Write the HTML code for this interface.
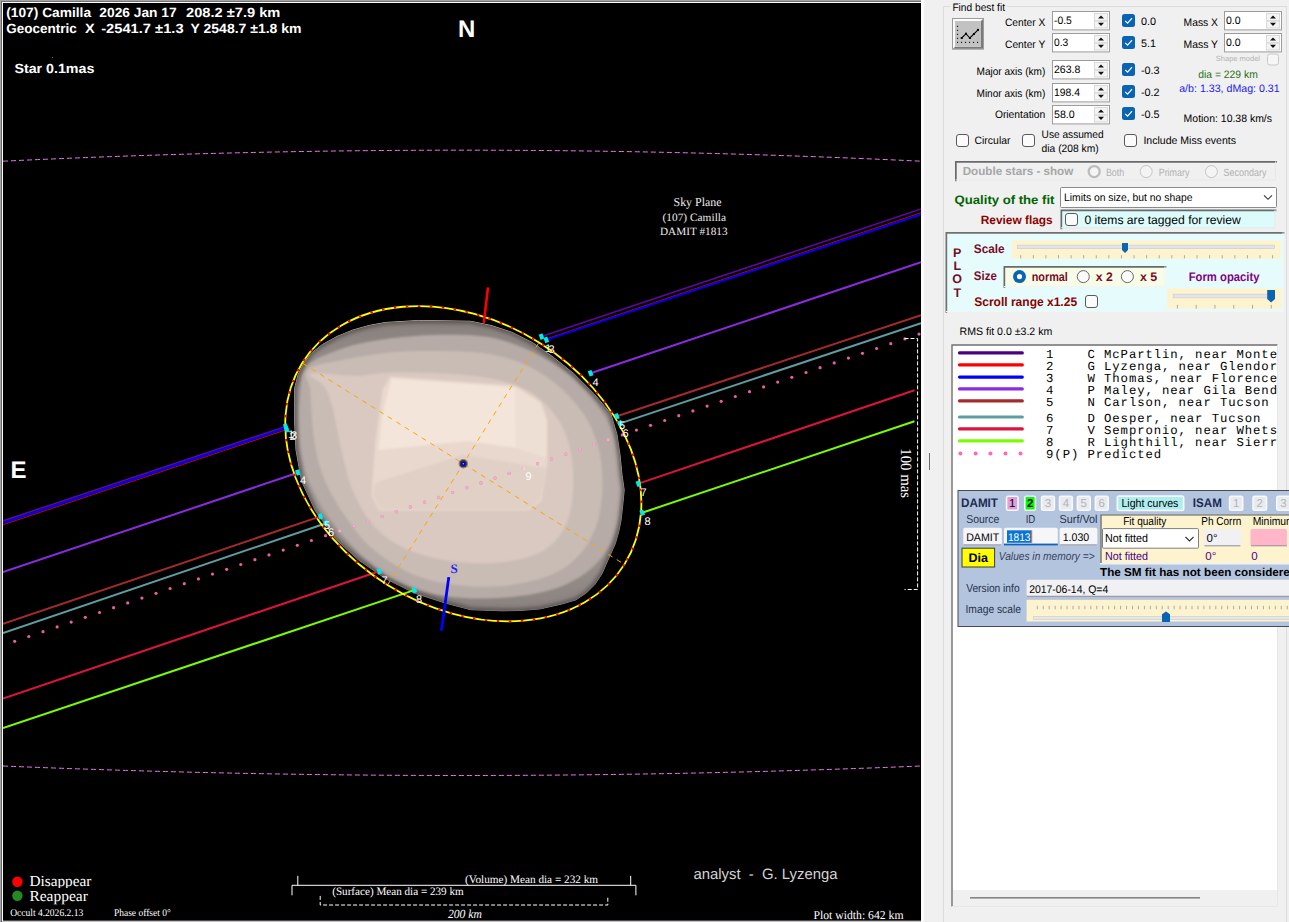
<!DOCTYPE html>
<html><head><meta charset="utf-8"><title>Occult plot</title>
<style>html,body{margin:0;padding:0;background:#f0f0f0;overflow:hidden}svg{display:block}text{white-space:pre}</style></head>
<body>
<svg width="1289" height="922" viewBox="0 0 1289 922" text-rendering="geometricPrecision">
<defs>
<clipPath id="plotclip"><rect x="3" y="3" width="918" height="917"/></clipPath>
<radialGradient id="ast" gradientUnits="userSpaceOnUse" cx="455" cy="440" r="190" gradientTransform="translate(455 440) rotate(32) scale(1 0.78) translate(-455 -440)">
<stop offset="0" stop-color="#f4e4d9"/><stop offset="0.45" stop-color="#e6d5cb"/><stop offset="0.7" stop-color="#cdbdb4"/><stop offset="0.88" stop-color="#aea29b"/><stop offset="1" stop-color="#8c847f"/>
</radialGradient>
<linearGradient id="rim" gradientUnits="userSpaceOnUse" x1="0" y1="320" x2="0" y2="611"><stop offset="0" stop-color="#888078"/><stop offset="0.05" stop-color="#8c8481"/><stop offset="0.3" stop-color="#a49b97"/><stop offset="0.65" stop-color="#a49b97"/><stop offset="0.95" stop-color="#8e8683"/><stop offset="1" stop-color="#8a827f"/></linearGradient>
<filter id="blur1" x="-10%" y="-10%" width="120%" height="120%"><feGaussianBlur stdDeviation="0.9"/></filter>
<filter id="blur2" x="-10%" y="-10%" width="120%" height="120%"><feGaussianBlur stdDeviation="2.2"/></filter>
<clipPath id="astclip"><polygon points="294.5,389 298,375 304,363 311.5,353 322.5,344.5 337,336.5 353,330 369,325.5 385.4,322.5 418.4,320.5 450,320.9 470.6,321.3 491.2,325.5 511.8,332.3 532.4,342.6 553,357 573.7,373.5 594.3,394.1 610.8,413.7 616.9,434.3 620,454.9 622.1,475.5 624.2,490 623.1,501.5 621.1,520 618.7,531.9 615.2,543.9 610.4,554.6 606.2,564.1 602,573.7 594.9,584.4 586.5,592.8 575.8,599.9 561.5,604.1 540,608.9 520,610.5 501.5,610.8 470.6,609.7 445.2,603 414.3,593 385.4,578.5 358.6,560 336,539.5 315.3,510.8 301.5,480.9 296,450 294.5,420"/></clipPath>
<clipPath id="legclip"><rect x="953" y="346" width="324" height="544"/></clipPath>
<clipPath id="pageclip"><rect x="0" y="0" width="1289" height="922"/></clipPath>
</defs>
<rect x="923" y="0" width="366" height="922" fill="#f0f0f0"/>
<rect x="921" y="0" width="3" height="922" fill="#fcfcfc"/>
<rect x="929" y="453" width="1" height="17" fill="#6a6a6a"/>
<path d="M950 6.5 H943.5 V930 M1007 6.5 H1286.5 V930" fill="none" stroke="#dcdcdc" stroke-width="1"/>
<text x="952.4" y="11" font-family="Liberation Sans" font-size="10.8" fill="#000" textLength="52.6" lengthAdjust="spacingAndGlyphs"  xml:space="preserve">Find best fit</text>
<rect x="952" y="18" width="32" height="31.7" fill="#9c9c9c"/><rect x="953" y="19" width="30" height="29.7" fill="#fdfdfd"/><path d="M953 48.7 L955 46.7 H981 V21 L983 19 V48.7 Z" fill="#7a7a7a"/><rect x="955" y="21" width="26" height="25.7" fill="#c2c2c2"/>
<g fill="#000"><rect x="957" y="25.8" width="1.1" height="1.1"/><rect x="957" y="29.8" width="1.1" height="1.1"/><rect x="957" y="33.8" width="1.1" height="1.1"/><rect x="957" y="37.8" width="1.1" height="1.1"/><rect x="957" y="41.8" width="1.1" height="1.1"/><rect x="961.0" y="41.8" width="1.1" height="1.1"/><rect x="965.0" y="41.8" width="1.1" height="1.1"/><rect x="969.0" y="41.8" width="1.1" height="1.1"/><rect x="973.0" y="41.8" width="1.1" height="1.1"/><rect x="977.0" y="41.8" width="1.1" height="1.1"/></g><path d="M961.7 38 L966 33.7 L969.9 38 L978 29.9" fill="none" stroke="#000" stroke-width="1.1"/><g fill="#000"><rect x="960.7" y="37" width="2" height="2"/><rect x="965" y="32.7" width="2" height="2"/><rect x="968.9" y="37" width="2" height="2"/><rect x="972.9" y="33" width="2" height="2"/><rect x="977" y="28.9" width="2" height="2"/></g>
<text x="1005" y="25.7" font-family="Liberation Sans" font-size="10.8" fill="#000" textLength="40.3" lengthAdjust="spacingAndGlyphs"  xml:space="preserve">Center X</text>
<rect x="1052.5" y="11.5" width="57" height="18.4" fill="#fff" stroke="#9c9c9c" stroke-width="1"/><rect x="1094" y="13" width="14" height="15.399999999999999" fill="#f0f0f0"/><rect x="1094.5" y="13.5" width="13" height="7.199999999999999" fill="#f4f4f4" stroke="#dadada" stroke-width="1"/><rect x="1094.5" y="21.2" width="13" height="6.699999999999999" fill="#f4f4f4" stroke="#dadada" stroke-width="1"/><path d="M1098 18.6 L1101 15.4 L1104 18.6 Z" fill="#111"/><path d="M1098 22.799999999999997 L1101 26.0 L1104 22.799999999999997 Z" fill="#111"/>
<text x="1054" y="23.8" font-family="Liberation Sans" font-size="10.8" fill="#000" textLength="17.9" lengthAdjust="spacingAndGlyphs"  xml:space="preserve">-0.5</text>
<text x="1005" y="47.7" font-family="Liberation Sans" font-size="10.8" fill="#000" textLength="40.3" lengthAdjust="spacingAndGlyphs"  xml:space="preserve">Center Y</text>
<rect x="1052.5" y="33.5" width="57" height="18.4" fill="#fff" stroke="#9c9c9c" stroke-width="1"/><rect x="1094" y="35" width="14" height="15.399999999999999" fill="#f0f0f0"/><rect x="1094.5" y="35.5" width="13" height="7.199999999999999" fill="#f4f4f4" stroke="#dadada" stroke-width="1"/><rect x="1094.5" y="43.2" width="13" height="6.699999999999999" fill="#f4f4f4" stroke="#dadada" stroke-width="1"/><path d="M1098 40.6 L1101 37.4 L1104 40.6 Z" fill="#111"/><path d="M1098 44.8 L1101 48.0 L1104 44.8 Z" fill="#111"/>
<text x="1054" y="45.8" font-family="Liberation Sans" font-size="10.8" fill="#000" textLength="14.2" lengthAdjust="spacingAndGlyphs"  xml:space="preserve">0.3</text>
<text x="976.5" y="74.9" font-family="Liberation Sans" font-size="10.8" fill="#000" textLength="68.8" lengthAdjust="spacingAndGlyphs"  xml:space="preserve">Major axis (km)</text>
<rect x="1052.5" y="60.5" width="57" height="18.4" fill="#fff" stroke="#9c9c9c" stroke-width="1"/><rect x="1094" y="62" width="14" height="15.399999999999999" fill="#f0f0f0"/><rect x="1094.5" y="62.5" width="13" height="7.199999999999999" fill="#f4f4f4" stroke="#dadada" stroke-width="1"/><rect x="1094.5" y="70.2" width="13" height="6.699999999999999" fill="#f4f4f4" stroke="#dadada" stroke-width="1"/><path d="M1098 67.6 L1101 64.4 L1104 67.6 Z" fill="#111"/><path d="M1098 71.80000000000001 L1101 75.0 L1104 71.80000000000001 Z" fill="#111"/>
<text x="1054" y="72.8" font-family="Liberation Sans" font-size="10.8" fill="#000" textLength="26.4" lengthAdjust="spacingAndGlyphs"  xml:space="preserve">263.8</text>
<text x="976.5" y="96.8" font-family="Liberation Sans" font-size="10.8" fill="#000" textLength="68.8" lengthAdjust="spacingAndGlyphs"  xml:space="preserve">Minor axis (km)</text>
<rect x="1052.5" y="83.5" width="57" height="18.4" fill="#fff" stroke="#9c9c9c" stroke-width="1"/><rect x="1094" y="85" width="14" height="15.399999999999999" fill="#f0f0f0"/><rect x="1094.5" y="85.5" width="13" height="7.199999999999999" fill="#f4f4f4" stroke="#dadada" stroke-width="1"/><rect x="1094.5" y="93.2" width="13" height="6.699999999999999" fill="#f4f4f4" stroke="#dadada" stroke-width="1"/><path d="M1098 90.6 L1101 87.4 L1104 90.6 Z" fill="#111"/><path d="M1098 94.80000000000001 L1101 98.0 L1104 94.80000000000001 Z" fill="#111"/>
<text x="1054" y="95.8" font-family="Liberation Sans" font-size="10.8" fill="#000" textLength="26" lengthAdjust="spacingAndGlyphs"  xml:space="preserve">198.4</text>
<text x="994.9" y="117.5" font-family="Liberation Sans" font-size="10.8" fill="#000" textLength="50.4" lengthAdjust="spacingAndGlyphs"  xml:space="preserve">Orientation</text>
<rect x="1052.5" y="105.5" width="57" height="18.4" fill="#fff" stroke="#9c9c9c" stroke-width="1"/><rect x="1094" y="107" width="14" height="15.399999999999999" fill="#f0f0f0"/><rect x="1094.5" y="107.5" width="13" height="7.199999999999999" fill="#f4f4f4" stroke="#dadada" stroke-width="1"/><rect x="1094.5" y="115.2" width="13" height="6.699999999999999" fill="#f4f4f4" stroke="#dadada" stroke-width="1"/><path d="M1098 112.6 L1101 109.4 L1104 112.6 Z" fill="#111"/><path d="M1098 116.80000000000001 L1101 120.0 L1104 116.80000000000001 Z" fill="#111"/>
<text x="1054" y="117.8" font-family="Liberation Sans" font-size="10.8" fill="#000" textLength="20.7" lengthAdjust="spacingAndGlyphs"  xml:space="preserve">58.0</text>
<rect x="1122" y="14" width="13" height="13" rx="2.5" fill="#0a64b4"/><path d="M1125.2 20.8 L1127.6 23.2 L1132 18.2" fill="none" stroke="#fff" stroke-width="1.2"/>
<text x="1141" y="24.7" font-family="Liberation Sans" font-size="10.8" fill="#000"  xml:space="preserve">0.0</text>
<rect x="1122" y="36" width="13" height="13" rx="2.5" fill="#0a64b4"/><path d="M1125.2 42.8 L1127.6 45.2 L1132 40.2" fill="none" stroke="#fff" stroke-width="1.2"/>
<text x="1141" y="46.7" font-family="Liberation Sans" font-size="10.8" fill="#000"  xml:space="preserve">5.1</text>
<rect x="1122" y="63" width="13" height="13" rx="2.5" fill="#0a64b4"/><path d="M1125.2 69.8 L1127.6 72.2 L1132 67.2" fill="none" stroke="#fff" stroke-width="1.2"/>
<text x="1141" y="73.7" font-family="Liberation Sans" font-size="10.8" fill="#000"  xml:space="preserve">-0.3</text>
<rect x="1122" y="85" width="13" height="13" rx="2.5" fill="#0a64b4"/><path d="M1125.2 91.8 L1127.6 94.2 L1132 89.2" fill="none" stroke="#fff" stroke-width="1.2"/>
<text x="1141" y="95.7" font-family="Liberation Sans" font-size="10.8" fill="#000"  xml:space="preserve">-0.2</text>
<rect x="1122" y="107" width="13" height="13" rx="2.5" fill="#0a64b4"/><path d="M1125.2 113.8 L1127.6 116.2 L1132 111.2" fill="none" stroke="#fff" stroke-width="1.2"/>
<text x="1141" y="117.7" font-family="Liberation Sans" font-size="10.8" fill="#000"  xml:space="preserve">-0.5</text>
<text x="1183.6" y="25.7" font-family="Liberation Sans" font-size="10.8" fill="#000" textLength="34.4" lengthAdjust="spacingAndGlyphs"  xml:space="preserve">Mass X</text>
<rect x="1224.5" y="11.5" width="57" height="18.4" fill="#fff" stroke="#9c9c9c" stroke-width="1"/><rect x="1266" y="13" width="14" height="15.399999999999999" fill="#f0f0f0"/><rect x="1266.5" y="13.5" width="13" height="7.199999999999999" fill="#f4f4f4" stroke="#dadada" stroke-width="1"/><rect x="1266.5" y="21.2" width="13" height="6.699999999999999" fill="#f4f4f4" stroke="#dadada" stroke-width="1"/><path d="M1270 18.6 L1273 15.4 L1276 18.6 Z" fill="#111"/><path d="M1270 22.799999999999997 L1273 26.0 L1276 22.799999999999997 Z" fill="#111"/>
<text x="1226" y="23.8" font-family="Liberation Sans" font-size="10.8" fill="#000" textLength="14.6" lengthAdjust="spacingAndGlyphs"  xml:space="preserve">0.0</text>
<text x="1183.6" y="47.7" font-family="Liberation Sans" font-size="10.8" fill="#000" textLength="34.4" lengthAdjust="spacingAndGlyphs"  xml:space="preserve">Mass Y</text>
<rect x="1224.5" y="33.5" width="57" height="18.4" fill="#fff" stroke="#9c9c9c" stroke-width="1"/><rect x="1266" y="35" width="14" height="15.399999999999999" fill="#f0f0f0"/><rect x="1266.5" y="35.5" width="13" height="7.199999999999999" fill="#f4f4f4" stroke="#dadada" stroke-width="1"/><rect x="1266.5" y="43.2" width="13" height="6.699999999999999" fill="#f4f4f4" stroke="#dadada" stroke-width="1"/><path d="M1270 40.6 L1273 37.4 L1276 40.6 Z" fill="#111"/><path d="M1270 44.8 L1273 48.0 L1276 44.8 Z" fill="#111"/>
<text x="1226" y="45.8" font-family="Liberation Sans" font-size="10.8" fill="#000" textLength="14.6" lengthAdjust="spacingAndGlyphs"  xml:space="preserve">0.0</text>
<text x="1215.8" y="60.5" font-family="Liberation Sans" font-size="7.6" fill="#b4b4b4" textLength="44.2" lengthAdjust="spacingAndGlyphs"  xml:space="preserve">Shape model</text>
<rect x="1267.5" y="54.0" width="11" height="11" rx="2.5" fill="#f6f6f6" stroke="#c8c8c8" stroke-width="1"/>
<text x="1198.2" y="77.7" font-family="Liberation Sans" font-size="10.8" fill="#2a7018" textLength="59.6" lengthAdjust="spacingAndGlyphs"  xml:space="preserve">dia = 229 km</text>
<text x="1179.2" y="91.9" font-family="Liberation Sans" font-size="10.8" fill="#2222ee" textLength="100.5" lengthAdjust="spacingAndGlyphs"  xml:space="preserve">a/b: 1.33, dMag: 0.31</text>
<text x="1183.6" y="121.7" font-family="Liberation Sans" font-size="10.8" fill="#000" textLength="88.4" lengthAdjust="spacingAndGlyphs"  xml:space="preserve">Motion: 10.38 km/s</text>
<rect x="956.5" y="134.5" width="12" height="12" rx="2.5" fill="#fbfbfb" stroke="#5a5a5a" stroke-width="1"/>
<text x="974.5" y="144.3" font-family="Liberation Sans" font-size="10.8" fill="#000" textLength="36" lengthAdjust="spacingAndGlyphs"  xml:space="preserve">Circular</text>
<rect x="1022.5" y="134.5" width="12" height="12" rx="2.5" fill="#fbfbfb" stroke="#5a5a5a" stroke-width="1"/>
<text x="1041.6" y="137.5" font-family="Liberation Sans" font-size="10.8" fill="#000" textLength="62" lengthAdjust="spacingAndGlyphs"  xml:space="preserve">Use assumed</text>
<text x="1041.6" y="152" font-family="Liberation Sans" font-size="10.8" fill="#000" textLength="57" lengthAdjust="spacingAndGlyphs"  xml:space="preserve">dia (208 km)</text>
<rect x="1124.5" y="134.5" width="12" height="12" rx="2.5" fill="#fbfbfb" stroke="#5a5a5a" stroke-width="1"/>
<text x="1143.4" y="144.3" font-family="Liberation Sans" font-size="10.8" fill="#000" textLength="92.6" lengthAdjust="spacingAndGlyphs"  xml:space="preserve">Include Miss events</text>
<rect x="955" y="161" width="321" height="19.5" fill="#f0f0f0"/><path d="M955 180.5 V161 H1276" fill="none" stroke="#696969" stroke-width="1.7" transform="translate(0.85 0.85)"/><path d="M955.5 180.0 H1275.5 V161.5" fill="none" stroke="#e8e8e8" stroke-width="1"/>
<text x="962.7" y="174.5" font-family="Liberation Sans" font-size="11.8" fill="#a6a6a6" textLength="110.6" lengthAdjust="spacingAndGlyphs" font-weight="bold"  xml:space="preserve">Double stars - show</text>
<circle cx="1094.2" cy="171.6" r="5.5" fill="#f4f4f4" stroke="#bdbdbd" stroke-width="2.4"/>
<text x="1105.9" y="175.7" font-family="Liberation Sans" font-size="10.5" fill="#b0b0b0" textLength="18.3" lengthAdjust="spacingAndGlyphs"  xml:space="preserve">Both</text>
<circle cx="1146.2" cy="171.6" r="6" fill="#f4f4f4" stroke="#c4c4c4" stroke-width="1"/>
<text x="1158.7" y="175.7" font-family="Liberation Sans" font-size="10.5" fill="#b0b0b0" textLength="30.7" lengthAdjust="spacingAndGlyphs"  xml:space="preserve">Primary</text>
<circle cx="1211.4" cy="171.6" r="6" fill="#f4f4f4" stroke="#c4c4c4" stroke-width="1"/>
<text x="1223.6" y="175.7" font-family="Liberation Sans" font-size="10.5" fill="#b0b0b0" textLength="42.8" lengthAdjust="spacingAndGlyphs"  xml:space="preserve">Secondary</text>
<text x="954.6" y="203.7" font-family="Liberation Sans" font-size="12.3" fill="#006400" textLength="99.8" lengthAdjust="spacingAndGlyphs" font-weight="bold"  xml:space="preserve">Quality of the fit</text>
<rect x="1060.5" y="187.5" width="216" height="20" rx="1" fill="#fff" stroke="#8a8a8a" stroke-width="1"/>
<text x="1064" y="201.3" font-family="Liberation Sans" font-size="10.8" fill="#000" textLength="128.5" lengthAdjust="spacingAndGlyphs"  xml:space="preserve">Limits on size, but no shape</text>
<path d="M1264 195.3 L1268 199.3 L1272 195.3" fill="none" stroke="#333" stroke-width="1.1"/>
<text x="980.7" y="223.6" font-family="Liberation Sans" font-size="12" fill="#8b0000" textLength="72" lengthAdjust="spacingAndGlyphs" font-weight="bold"  xml:space="preserve">Review flags</text>
<rect x="1060.5" y="209.6" width="215" height="18.7" fill="#dcfcfc"/><path d="M1060.5 228.29999999999998 V209.6 H1275.5" fill="none" stroke="#696969" stroke-width="1.7" transform="translate(0.85 0.85)"/><path d="M1061.0 227.79999999999998 H1275.0 V210.1" fill="none" stroke="#e8e8e8" stroke-width="1"/>
<rect x="1065.5" y="213.5" width="12" height="12" rx="2.5" fill="#fbfbfb" stroke="#5a5a5a" stroke-width="1"/>
<text x="1084.4" y="224" font-family="Liberation Sans" font-size="12.2" fill="#000" textLength="156.4" lengthAdjust="spacingAndGlyphs"  xml:space="preserve">0 items are tagged for review</text>
<rect x="945.5" y="232" width="338" height="80" fill="#e6fcfc"/><path d="M945.5 312 V232 H1283.5" fill="none" stroke="#707070" stroke-width="1.7" transform="translate(0.85 0.85)"/><path d="M946.0 311.5 H1283.0 V232.5" fill="none" stroke="#f4f4f4" stroke-width="1"/>
<text x="957.2" y="257" font-family="Liberation Sans" font-size="12.5" fill="#7a0a28" text-anchor="middle" font-weight="bold"  xml:space="preserve">P</text>
<text x="957.2" y="270.4" font-family="Liberation Sans" font-size="12.5" fill="#7a0a28" text-anchor="middle" font-weight="bold"  xml:space="preserve">L</text>
<text x="957.2" y="283.2" font-family="Liberation Sans" font-size="12.5" fill="#7a0a28" text-anchor="middle" font-weight="bold"  xml:space="preserve">O</text>
<text x="957.2" y="296.5" font-family="Liberation Sans" font-size="12.5" fill="#7a0a28" text-anchor="middle" font-weight="bold"  xml:space="preserve">T</text>
<text x="973.8" y="253.4" font-family="Liberation Sans" font-size="12.5" fill="#7a0a28" textLength="30.9" lengthAdjust="spacingAndGlyphs" font-weight="bold"  xml:space="preserve">Scale</text>
<rect x="1011.8" y="240.2" width="269" height="18.6" fill="#fdf4cf"/>
<rect x="1017.5" y="245.2" width="257" height="3.4" fill="#e4e4e8" stroke="#d0d0d4" stroke-width="0.8"/>
<path d="M1020.70 255.2 V258.4 M1033.30 255.2 V258.4 M1045.89 255.2 V258.4 M1058.49 255.2 V258.4 M1071.08 255.2 V258.4 M1083.67 255.2 V258.4 M1096.27 255.2 V258.4 M1108.87 255.2 V258.4 M1121.46 255.2 V258.4 M1134.06 255.2 V258.4 M1146.65 255.2 V258.4 M1159.25 255.2 V258.4 M1171.84 255.2 V258.4 M1184.43 255.2 V258.4 M1197.03 255.2 V258.4 M1209.62 255.2 V258.4 M1222.22 255.2 V258.4 M1234.82 255.2 V258.4 M1247.41 255.2 V258.4 M1260.01 255.2 V258.4 M1272.60 255.2 V258.4 " stroke="#b0a8a0" stroke-width="1" fill="none"/>
<path d="M1122 243 H1128 V250 L1125 253 L1122 250 Z" fill="#0a64b4"/>
<text x="973.8" y="279.8" font-family="Liberation Sans" font-size="12.5" fill="#7a0a28" textLength="23" lengthAdjust="spacingAndGlyphs" font-weight="bold"  xml:space="preserve">Size</text>
<rect x="1003.5" y="266" width="162" height="21" fill="#f6fce6"/><path d="M1003.5 287 V266 H1165.5" fill="none" stroke="#6a6a6a" stroke-width="1.7" transform="translate(0.85 0.85)"/><path d="M1004.0 286.5 H1165.0 V266.5" fill="none" stroke="#f4f4f4" stroke-width="1"/>
<circle cx="1019.5" cy="276.6" r="6.5" fill="#0a64b4"/><circle cx="1019.5" cy="276.6" r="2.6" fill="#fff"/>
<text x="1031.7" y="280.7" font-family="Liberation Sans" font-size="12.5" fill="#7a0a28" textLength="36.1" lengthAdjust="spacingAndGlyphs" font-weight="bold"  xml:space="preserve">normal</text>
<circle cx="1083.3" cy="276.6" r="6" fill="#fbfbfb" stroke="#666" stroke-width="1"/>
<text x="1095.8" y="280.7" font-family="Liberation Sans" font-size="12.5" fill="#7a0a28" textLength="17" lengthAdjust="spacingAndGlyphs" font-weight="bold"  xml:space="preserve">x 2</text>
<circle cx="1127.4" cy="276.6" r="6" fill="#fbfbfb" stroke="#666" stroke-width="1"/>
<text x="1139.9" y="280.7" font-family="Liberation Sans" font-size="12.5" fill="#7a0a28" textLength="17.3" lengthAdjust="spacingAndGlyphs" font-weight="bold"  xml:space="preserve">x 5</text>
<text x="1188.7" y="280.7" font-family="Liberation Sans" font-size="12.5" fill="#800080" textLength="70.8" lengthAdjust="spacingAndGlyphs" font-weight="bold"  xml:space="preserve">Form opacity</text>
<rect x="1167.2" y="288.3" width="114.6" height="20.3" fill="#fdf4cf"/>
<rect x="1173.3" y="294.2" width="101" height="3.6" fill="#e4e4e8" stroke="#d0d0d4" stroke-width="0.8"/>
<path d="M1177.40 304.9 V308.6 M1196.18 304.9 V308.6 M1214.96 304.9 V308.6 M1233.74 304.9 V308.6 M1252.52 304.9 V308.6 M1271.30 304.9 V308.6 " stroke="#b0a8a0" stroke-width="1" fill="none"/>
<path d="M1267.2 290 H1275 V299 L1271.1 302.4 L1267.2 299 Z" fill="#0a64b4"/>
<text x="974.2" y="305.8" font-family="Liberation Sans" font-size="12.5" fill="#8b0000" textLength="102.9" lengthAdjust="spacingAndGlyphs" font-weight="bold"  xml:space="preserve">Scroll range x1.25</text>
<rect x="1085.5" y="295.5" width="12" height="12" rx="2.5" fill="#fbfbfb" stroke="#5a5a5a" stroke-width="1"/>
<text x="959.5" y="334.8" font-family="Liberation Sans" font-size="10.8" fill="#000" textLength="92.8" lengthAdjust="spacingAndGlyphs"  xml:space="preserve">RMS fit 0.0 ±3.2 km</text>
<rect x="951.5" y="344.5" width="326" height="562" fill="#fff"/>
<path d="M952 906.5 V345 H1277.5" fill="none" stroke="#6e6e6e" stroke-width="1.4"/>
<path d="M1277.5 345 V906.5 H952" fill="none" stroke="#e6e6e6" stroke-width="1"/>
<g clip-path="url(#legclip)">
<line x1="959.5" y1="352.9" x2="1022.3" y2="352.9" stroke="#4b0082" stroke-width="3.2" stroke-linecap="round"/>
<text x="1046.1" y="357.8" font-family="Liberation Mono" font-size="12.3" fill="#000" letter-spacing="0.9" xml:space="preserve">1    C McPartlin, near Montebello</text>
<line x1="959.5" y1="364.9" x2="1022.3" y2="364.9" stroke="#ff0000" stroke-width="3.2" stroke-linecap="round"/>
<text x="1046.1" y="369.6" font-family="Liberation Mono" font-size="12.3" fill="#000" letter-spacing="0.9" xml:space="preserve">2    G Lyzenga, near Glendora</text>
<line x1="959.5" y1="377.1" x2="1022.3" y2="377.1" stroke="#0000ff" stroke-width="3.2" stroke-linecap="round"/>
<text x="1046.1" y="381.5" font-family="Liberation Mono" font-size="12.3" fill="#000" letter-spacing="0.9" xml:space="preserve">3    W Thomas, near Florence,</text>
<line x1="959.5" y1="388.9" x2="1022.3" y2="388.9" stroke="#8a2be2" stroke-width="3.2" stroke-linecap="round"/>
<text x="1046.1" y="393.5" font-family="Liberation Mono" font-size="12.3" fill="#000" letter-spacing="0.9" xml:space="preserve">4    P Maley, near Gila Bend,</text>
<line x1="959.5" y1="400.9" x2="1022.3" y2="400.9" stroke="#a52a2a" stroke-width="3.2" stroke-linecap="round"/>
<text x="1046.1" y="405.6" font-family="Liberation Mono" font-size="12.3" fill="#000" letter-spacing="0.9" xml:space="preserve">5    N Carlson, near Tucson</text>
<line x1="959.5" y1="417.0" x2="1022.3" y2="417.0" stroke="#5f9ea0" stroke-width="3.2" stroke-linecap="round"/>
<text x="1046.1" y="421.6" font-family="Liberation Mono" font-size="12.3" fill="#000" letter-spacing="0.9" xml:space="preserve">6    D Oesper, near Tucson</text>
<line x1="959.5" y1="428.9" x2="1022.3" y2="428.9" stroke="#dc143c" stroke-width="3.2" stroke-linecap="round"/>
<text x="1046.1" y="433.5" font-family="Liberation Mono" font-size="12.3" fill="#000" letter-spacing="0.9" xml:space="preserve">7    V Sempronio, near Whetstone</text>
<line x1="959.5" y1="440.9" x2="1022.3" y2="440.9" stroke="#7cfc00" stroke-width="3.2" stroke-linecap="round"/>
<text x="1046.1" y="445.5" font-family="Liberation Mono" font-size="12.3" fill="#000" letter-spacing="0.9" xml:space="preserve">8    R Lighthill, near Sierra</text>
<circle cx="960.4" cy="453.5" r="2" fill="#ff69b4"/><circle cx="975.6" cy="453.5" r="2" fill="#ff69b4"/><circle cx="990.4" cy="453.5" r="2" fill="#ff69b4"/><circle cx="1005.5" cy="453.5" r="2" fill="#ff69b4"/><circle cx="1020.5" cy="453.5" r="2" fill="#ff69b4"/>
<text x="1046.1" y="457.7" font-family="Liberation Mono" font-size="12.3" fill="#000" letter-spacing="0.9" xml:space="preserve">9(P) Predicted</text>
</g>
<rect x="953" y="890" width="324" height="16" fill="#f0f0f0"/>
<rect x="970" y="897" width="230" height="1.6" fill="#858585"/>
<g clip-path="url(#pageclip)">
<rect x="958" y="490.5" width="340" height="136" fill="#b2c4de" stroke="#4a4a52" stroke-width="1"/>
<text x="961" y="507.4" font-family="Liberation Sans" font-size="12.5" fill="#1c2c50" textLength="37" lengthAdjust="spacingAndGlyphs" font-weight="bold"  xml:space="preserve">DAMIT</text>
<rect x="1005.8" y="495.5" width="13" height="15.5" rx="2.5" fill="#f8f8fa"/><rect x="1007.4" y="497" width="9.8" height="12.5" fill="#dda0dd"/><text x="1012.3" y="507.3" font-family="Liberation Sans" font-size="11.5" fill="#000" text-anchor="middle"  xml:space="preserve">1</text>

<rect x="1024" y="495.5" width="12.2" height="15.5" rx="2.5" fill="#f8f8fa"/><rect x="1025.6" y="497" width="9.0" height="12.5" fill="#00ff00"/><text x="1030.1" y="507.3" font-family="Liberation Sans" font-size="11.5" fill="#000" text-anchor="middle" font-weight="bold"  xml:space="preserve">2</text>

<rect x="1040.8" y="495.5" width="14.4" height="15.5" rx="2.5" fill="#f8f8fa"/><rect x="1042.3999999999999" y="497" width="11.2" height="12.5" fill="#e9ebee"/><text x="1048.0" y="507.3" font-family="Liberation Sans" font-size="11.5" fill="#b4b4b4" text-anchor="middle"  xml:space="preserve">3</text>

<rect x="1058.7" y="495.5" width="14.4" height="15.5" rx="2.5" fill="#f8f8fa"/><rect x="1060.3" y="497" width="11.2" height="12.5" fill="#e9ebee"/><text x="1065.9" y="507.3" font-family="Liberation Sans" font-size="11.5" fill="#b4b4b4" text-anchor="middle"  xml:space="preserve">4</text>

<rect x="1076.6" y="495.5" width="14.4" height="15.5" rx="2.5" fill="#f8f8fa"/><rect x="1078.1999999999998" y="497" width="11.2" height="12.5" fill="#e9ebee"/><text x="1083.8" y="507.3" font-family="Liberation Sans" font-size="11.5" fill="#b4b4b4" text-anchor="middle"  xml:space="preserve">5</text>

<rect x="1094.6" y="495.5" width="14.4" height="15.5" rx="2.5" fill="#f8f8fa"/><rect x="1096.1999999999998" y="497" width="11.2" height="12.5" fill="#e9ebee"/><text x="1101.8" y="507.3" font-family="Liberation Sans" font-size="11.5" fill="#b4b4b4" text-anchor="middle"  xml:space="preserve">6</text>

<rect x="1116.5" y="495.3" width="68" height="16" rx="2.5" fill="#f8f8fa"/><rect x="1118.2" y="497" width="64.6" height="12.6" fill="#afeeee"/>
<text x="1121.5" y="506.9" font-family="Liberation Sans" font-size="11.5" fill="#000" textLength="56.9" lengthAdjust="spacingAndGlyphs"  xml:space="preserve">Light curves</text>
<text x="1192.8" y="507.4" font-family="Liberation Sans" font-size="12.5" fill="#1c2c50" textLength="29" lengthAdjust="spacingAndGlyphs" font-weight="bold"  xml:space="preserve">ISAM</text>
<rect x="1228.8" y="495.5" width="14.7" height="15.5" rx="2.5" fill="#f8f8fa"/><rect x="1230.3999999999999" y="497" width="11.5" height="12.5" fill="#e9ebee"/><text x="1236.1499999999999" y="507.3" font-family="Liberation Sans" font-size="11.5" fill="#b4b4b4" text-anchor="middle"  xml:space="preserve">1</text>

<rect x="1252.2" y="495.5" width="15.1" height="15.5" rx="2.5" fill="#f8f8fa"/><rect x="1253.8" y="497" width="11.899999999999999" height="12.5" fill="#e9ebee"/><text x="1259.75" y="507.3" font-family="Liberation Sans" font-size="11.5" fill="#b4b4b4" text-anchor="middle"  xml:space="preserve">2</text>

<rect x="1276" y="495.5" width="15" height="15.5" rx="2.5" fill="#f8f8fa"/><rect x="1277.6" y="497" width="11.8" height="12.5" fill="#e9ebee"/><text x="1283.5" y="507.3" font-family="Liberation Sans" font-size="11.5" fill="#b4b4b4" text-anchor="middle"  xml:space="preserve">3</text>

<text x="966.2" y="523.4" font-family="Liberation Sans" font-size="11.5" fill="#26324a" textLength="33" lengthAdjust="spacingAndGlyphs"  xml:space="preserve">Source</text>
<text x="1025.7" y="523.4" font-family="Liberation Sans" font-size="11.5" fill="#26324a" textLength="9.6" lengthAdjust="spacingAndGlyphs"  xml:space="preserve">ID</text>
<text x="1059.6" y="523.4" font-family="Liberation Sans" font-size="11.5" fill="#26324a" textLength="37.8" lengthAdjust="spacingAndGlyphs"  xml:space="preserve">Surf/Vol</text>
<rect x="963.2" y="527.7" width="38.7" height="17.4" rx="2" fill="#f6f6f8"/><rect x="964" y="544.3" width="37" height="1" fill="#9a9aa0"/>
<text x="966.2" y="540.8" font-family="Liberation Sans" font-size="11" fill="#000" textLength="33" lengthAdjust="spacingAndGlyphs"  xml:space="preserve">DAMIT</text>
<rect x="1004" y="527.7" width="53.8" height="17.4" rx="2" fill="#f6f6f8"/><rect x="1004" y="543.6" width="53.8" height="1.8" fill="#0a64c0"/>
<rect x="1007" y="530.3" width="24.4" height="12.5" fill="#0a74d4"/><rect x="1031.2" y="530.3" width="1" height="12.5" fill="#c86a28"/>
<text x="1008" y="540.8" font-family="Liberation Sans" font-size="11" fill="#fff" textLength="22.5" lengthAdjust="spacingAndGlyphs"  xml:space="preserve">1813</text>
<rect x="1059.6" y="527.7" width="37.8" height="17.4" rx="2" fill="#f6f6f8"/><rect x="1060.4" y="544.3" width="36.2" height="1" fill="#9a9aa0"/>
<text x="1062.7" y="540.8" font-family="Liberation Sans" font-size="11" fill="#000" textLength="26.5" lengthAdjust="spacingAndGlyphs"  xml:space="preserve">1.030</text>
<rect x="1100.4" y="514.7" width="200" height="48.3" fill="#fdf4cf"/><path d="M1101 563 V515 H1300" fill="none" stroke="#5a5a5a" stroke-width="1.2"/><rect x="1100" y="563" width="200" height="1.5" fill="#eef2f8"/>
<text x="1123.2" y="524.8" font-family="Liberation Sans" font-size="11.5" fill="#000" textLength="43.1" lengthAdjust="spacingAndGlyphs"  xml:space="preserve">Fit quality</text>
<text x="1201.3" y="524.8" font-family="Liberation Sans" font-size="11.5" fill="#000" textLength="40" lengthAdjust="spacingAndGlyphs"  xml:space="preserve">Ph Corrn</text>
<text x="1252.7" y="524.8" font-family="Liberation Sans" font-size="11.5" fill="#000" textLength="42" lengthAdjust="spacingAndGlyphs"  xml:space="preserve">Minimum</text>
<rect x="1102.5" y="528.6" width="96" height="19.6" rx="1" fill="#fff" stroke="#7e7e7e" stroke-width="1"/>
<text x="1105" y="542" font-family="Liberation Sans" font-size="11.5" fill="#000" textLength="43" lengthAdjust="spacingAndGlyphs"  xml:space="preserve">Not fitted</text>
<path d="M1185.5 537 L1189.5 541 L1193.5 537" fill="none" stroke="#333" stroke-width="1.1"/>
<rect x="1203.6" y="529.1" width="37.7" height="16.9" rx="2" fill="#f1f1f3"/><rect x="1204.4" y="545.3" width="36" height="1" fill="#8e8e94"/>
<text x="1206.5" y="541.5" font-family="Liberation Sans" font-size="11.5" fill="#000"  xml:space="preserve">0°</text>
<rect x="1250.5" y="529.1" width="36.4" height="16.9" rx="1.5" fill="#ffb6c8"/><rect x="1251" y="545.3" width="36" height="1" fill="#9e8e94"/>
<text x="1105" y="559.5" font-family="Liberation Sans" font-size="11.5" fill="#4b0082" textLength="43" lengthAdjust="spacingAndGlyphs"  xml:space="preserve">Not fitted</text>
<text x="1205.3" y="559.5" font-family="Liberation Sans" font-size="11.5" fill="#4b0082"  xml:space="preserve">0°</text>
<text x="1251.3" y="559.5" font-family="Liberation Sans" font-size="11.5" fill="#4b0082"  xml:space="preserve">0</text>
<rect x="962" y="548.2" width="32.6" height="18.8" fill="#ffff00" stroke="#3c3c3c" stroke-width="1"/>
<text x="978.3" y="562.4" font-family="Liberation Sans" font-size="12.5" fill="#000" text-anchor="middle" font-weight="bold"  xml:space="preserve">Dia</text>
<text x="998.8" y="559.5" font-family="Liberation Sans" font-size="11.5" fill="#36425c" textLength="95.8" lengthAdjust="spacingAndGlyphs" font-style="italic"  xml:space="preserve">Values in memory =&gt;</text>
<text x="1100" y="575.8" font-family="Liberation Sans" font-size="11.5" fill="#000" textLength="197" lengthAdjust="spacingAndGlyphs" font-weight="bold"  xml:space="preserve">The SM fit has not been considered</text>
<text x="966.2" y="591.6" font-family="Liberation Sans" font-size="11.5" fill="#26324a" textLength="53.4" lengthAdjust="spacingAndGlyphs"  xml:space="preserve">Version info</text>
<rect x="1026.6" y="579.8" width="270" height="16.8" rx="2" fill="#f1f1f3"/><rect x="1027" y="595.8" width="270" height="1" fill="#8e8e94"/>
<text x="1029.2" y="592.5" font-family="Liberation Sans" font-size="11" fill="#000" textLength="79" lengthAdjust="spacingAndGlyphs"  xml:space="preserve">2017-06-14, Q=4</text>
<text x="965.5" y="612.8" font-family="Liberation Sans" font-size="11.5" fill="#26324a" textLength="55.5" lengthAdjust="spacingAndGlyphs"  xml:space="preserve">Image scale</text>
<rect x="1026.6" y="599.8" width="270" height="21.7" fill="#fdf4cf"/>
<path d="M1037.30 605.8 V609.3 M1043.25 605.8 V609.3 M1049.20 605.8 V609.3 M1055.15 605.8 V609.3 M1061.10 605.8 V609.3 M1067.05 605.8 V609.3 M1073.00 605.8 V609.3 M1078.95 605.8 V609.3 M1084.90 605.8 V609.3 M1090.85 605.8 V609.3 M1096.80 605.8 V609.3 M1102.75 605.8 V609.3 M1108.70 605.8 V609.3 M1114.65 605.8 V609.3 M1120.60 605.8 V609.3 M1126.55 605.8 V609.3 M1132.50 605.8 V609.3 M1138.45 605.8 V609.3 M1144.40 605.8 V609.3 M1150.35 605.8 V609.3 M1156.30 605.8 V609.3 M1162.25 605.8 V609.3 M1168.20 605.8 V609.3 M1174.15 605.8 V609.3 M1180.10 605.8 V609.3 M1186.05 605.8 V609.3 M1192.00 605.8 V609.3 M1197.95 605.8 V609.3 M1203.90 605.8 V609.3 M1209.85 605.8 V609.3 M1215.80 605.8 V609.3 M1221.75 605.8 V609.3 M1227.70 605.8 V609.3 M1233.65 605.8 V609.3 M1239.60 605.8 V609.3 M1245.55 605.8 V609.3 M1251.50 605.8 V609.3 M1257.45 605.8 V609.3 M1263.40 605.8 V609.3 M1269.35 605.8 V609.3 M1275.30 605.8 V609.3 M1281.25 605.8 V609.3 M1287.20 605.8 V609.3 " stroke="#a8a8b0" stroke-width="1" fill="none"/>
<rect x="1033.6" y="616.4" width="262" height="3" fill="#e6e6e6" stroke="#cfcfcf" stroke-width="0.7"/>
<path d="M1162 622 V614.2 L1166 611.4 L1170 614.2 V622 Z" fill="#0a64b4"/>
</g>
<rect x="0" y="0" width="921" height="922" fill="#a2a6a2"/>
<rect x="1" y="1.2" width="920" height="921" fill="#6a646a"/>
<rect x="2" y="2" width="919" height="919.6" fill="#fff"/>
<rect x="3" y="3" width="918" height="917.7" fill="#000"/>
<g clip-path="url(#plotclip)">
<path d="M3 161.2 A9561 9561 0 0 1 921 161.2" fill="none" stroke="#e87ae8" stroke-width="1" stroke-dasharray="5 3"/>
<path d="M3 766 A11100 11100 0 0 0 921 766" fill="none" stroke="#e87ae8" stroke-width="1" stroke-dasharray="5 3"/>
<polygon points="294.5,389 298,375 304,363 311.5,353 322.5,344.5 337,336.5 353,330 369,325.5 385.4,322.5 418.4,320.5 450,320.9 470.6,321.3 491.2,325.5 511.8,332.3 532.4,342.6 553,357 573.7,373.5 594.3,394.1 610.8,413.7 616.9,434.3 620,454.9 622.1,475.5 624.2,490 623.1,501.5 621.1,520 618.7,531.9 615.2,543.9 610.4,554.6 606.2,564.1 602,573.7 594.9,584.4 586.5,592.8 575.8,599.9 561.5,604.1 540,608.9 520,610.5 501.5,610.8 470.6,609.7 445.2,603 414.3,593 385.4,578.5 358.6,560 336,539.5 315.3,510.8 301.5,480.9 296,450 294.5,420" fill="url(#ast)" stroke="url(#ast)" stroke-width="1" stroke-linejoin="round"/>
<g clip-path="url(#astclip)">
<polygon points="294.5,389 298,375 304,363 311.5,353 322.5,344.5 337,336.5 353,330 369,325.5 385.4,322.5 418.4,320.5 450,320.9 470.6,321.3 491.2,325.5 511.8,332.3 532.4,342.6 553,357 573.7,373.5 594.3,394.1 610.8,413.7 616.9,434.3 620,454.9 622.1,475.5 624.2,490 623.1,501.5 621.1,520 618.7,531.9 615.2,543.9 610.4,554.6 606.2,564.1 602,573.7 594.9,584.4 586.5,592.8 575.8,599.9 561.5,604.1 540,608.9 520,610.5 501.5,610.8 470.6,609.7 445.2,603 414.3,593 385.4,578.5 358.6,560 336,539.5 315.3,510.8 301.5,480.9 296,450 294.5,420" fill="url(#rim)"/>
<g filter="url(#blur1)">
<path d="M305.6 366.7 C311.8 359.6 327.1 354.5 337.7 350.3 C348.2 346.1 355.9 344.1 368.9 341.7 C381.9 339.3 398.2 336.9 415.8 335.9 C433.4 334.8 458.8 334.4 474.4 335.5 C490.0 336.6 498.5 339.0 509.5 342.5 C520.6 346.0 531.0 351.0 540.8 356.2 C550.5 361.4 559.7 366.9 568.1 373.8 C576.6 380.6 584.7 388.7 591.6 397.2 C598.4 405.7 604.5 414.8 609.1 424.5 C613.8 434.3 617.5 444.7 619.7 455.8 C621.8 466.8 622.5 479.2 622.0 490.9 C621.6 502.7 620.1 515.4 617.0 526.1 C613.8 536.8 609.5 546.9 603.3 555.4 C597.1 563.9 589.0 571.0 579.8 576.9 C570.7 582.7 560.3 587.2 548.6 590.5 C536.9 593.9 522.6 595.9 509.5 597.2 C496.5 598.5 482.8 598.8 470.5 598.4 C458.1 597.9 445.7 596.4 435.3 594.5 C424.9 592.5 416.4 589.9 408.0 586.6 C399.5 583.4 391.0 579.0 384.5 574.9 C378.0 570.8 374.1 566.6 368.9 562.0 C363.7 557.5 359.1 553.9 353.3 547.6 C347.4 541.3 339.8 532.4 333.8 524.1 C327.7 515.9 321.7 506.8 317.0 498.0 C312.2 489.2 308.1 480.4 305.2 471.4 C302.4 462.4 300.9 453.2 299.8 444.1 C298.7 434.9 298.5 425.2 298.6 416.7 C298.7 408.3 299.4 401.6 300.5 393.3 C301.7 384.9 299.4 373.9 305.6 366.7Z" fill="#b6aba6"/>
<path d="M307.2 369.8 C312.4 365.0 330.0 362.7 341.6 360.1 C353.2 357.5 364.3 355.7 376.7 354.2 C389.1 352.7 399.5 351.4 415.8 351.1 C432.1 350.8 458.1 350.8 474.4 352.3 C490.7 353.8 501.7 356.2 513.4 360.1 C525.2 364.0 535.6 369.8 544.7 375.7 C553.8 381.6 561.0 387.7 568.1 395.2 C575.3 402.7 582.4 411.2 587.7 420.6 C592.9 430.1 596.9 440.8 599.4 451.9 C601.8 462.9 602.8 475.3 602.5 487.0 C602.2 498.8 600.5 511.8 597.4 522.2 C594.3 532.6 589.6 541.7 583.8 549.5 C577.9 557.3 570.7 563.9 562.3 569.1 C553.8 574.3 544.4 577.9 533.0 580.8 C521.6 583.7 506.9 586.0 493.9 586.6 C480.9 587.3 467.2 586.3 454.8 584.7 C442.5 583.1 430.1 580.5 419.7 576.9 C409.3 573.3 400.8 568.4 392.3 563.2 C383.9 558.0 376.1 552.5 368.9 545.6 C361.7 538.8 355.6 530.7 349.4 522.2 C343.2 513.7 336.7 504.0 331.8 494.8 C326.9 485.7 323.0 476.6 320.1 467.5 C317.1 458.4 315.7 449.3 314.2 440.2 C312.8 431.0 312.1 421.3 311.5 412.8 C310.8 404.3 311.0 396.5 310.3 389.4 C309.6 382.2 302.0 374.7 307.2 369.8Z" fill="#c9bcb5"/>
<path d="M311.1 373.8 C316.6 372.0 343.0 376.0 357.2 375.7 C371.4 375.4 376.7 372.2 396.2 372.2 C415.8 372.2 453.5 373.2 474.4 375.7 C495.2 378.2 509.2 382.5 521.2 387.4 C533.3 392.3 539.5 397.8 546.6 405.0 C553.8 412.2 560.0 421.3 564.2 430.4 C568.5 439.5 570.6 448.9 572.0 459.7 C573.5 470.4 573.8 484.1 572.8 494.8 C571.8 505.6 569.9 515.7 566.2 524.1 C562.5 532.6 557.4 540.0 550.5 545.6 C543.7 551.3 535.9 555.2 525.2 558.1 C514.4 561.1 499.1 562.8 486.1 563.2 C473.1 563.6 459.4 562.4 447.0 560.5 C434.7 558.5 422.3 555.6 411.9 551.5 C401.5 547.4 392.3 542.0 384.5 535.9 C376.7 529.7 370.5 522.5 365.0 514.4 C359.5 506.2 354.9 496.1 351.3 487.0 C347.7 477.9 345.8 468.8 343.5 459.7 C341.2 450.6 339.6 441.5 337.7 432.3 C335.7 423.2 334.1 412.7 331.8 405.0 C329.5 397.3 327.4 391.5 324.0 386.2 C320.5 381.0 305.6 375.5 311.1 373.8Z" fill="#d9c9c0"/>
<polygon points="391,378 515,387 540,403 546,420 546,462 540,500 528,509 380,509 373,495 377,440 384,390" fill="#e8d8cd" stroke="#e8d8cd" stroke-width="3" stroke-linejoin="round"/>
<polygon points="375,483 462,455 546,468 540,500 528,509 380,509 373,495" fill="#e0d0c5"/>
<polygon points="391.5,378.5 515,387.5 516,448 468,441 378.5,450 382,416" fill="#f4e5da"/>
<polygon points="515,387.5 540,403 546,420 546,458 516,448" fill="#eedfd4"/>
</g>
<polygon points="294.5,389 298,375 304,363 311.5,353 322.5,344.5 337,336.5 353,330 369,325.5 385.4,322.5 418.4,320.5 450,320.9 470.6,321.3 491.2,325.5 511.8,332.3 532.4,342.6 553,357 573.7,373.5 594.3,394.1 610.8,413.7 616.9,434.3 620,454.9 622.1,475.5 624.2,490 623.1,501.5 621.1,520 618.7,531.9 615.2,543.9 610.4,554.6 606.2,564.1 602,573.7 594.9,584.4 586.5,592.8 575.8,599.9 561.5,604.1 540,608.9 520,610.5 501.5,610.8 470.6,609.7 445.2,603 414.3,593 385.4,578.5 358.6,560 336,539.5 315.3,510.8 301.5,480.9 296,450 294.5,420" fill="none" stroke="#504a48" stroke-width="4" filter="url(#blur2)"/>

</g>
<line x1="3" y1="520.9" x2="285.7" y2="426.5" stroke="#5a0a9a" stroke-width="1.6"/>
<line x1="541.5" y1="336.6" x2="921" y2="209.0" stroke="#5a0a9a" stroke-width="1.6"/>
<line x1="3" y1="524.8" x2="286.5" y2="429.7" stroke="#e00000" stroke-width="0.9"/>
<line x1="546" y1="339" x2="921" y2="212.7" stroke="#e00000" stroke-width="0.9"/>
<line x1="3" y1="523.1" x2="286" y2="428" stroke="#0000ff" stroke-width="2.0"/>
<line x1="546.3" y1="339.9" x2="921" y2="214.4" stroke="#0000ff" stroke-width="2.0"/>
<line x1="3" y1="572.1" x2="297.8" y2="472.8" stroke="#8a2be2" stroke-width="2.0"/>
<line x1="590.6" y1="373.3" x2="921" y2="262.1" stroke="#8a2be2" stroke-width="2.0"/>
<line x1="3" y1="623.7" x2="320.5" y2="516.4" stroke="#a52a2a" stroke-width="2.0"/>
<line x1="616.9" y1="416.3" x2="921" y2="315.1" stroke="#a52a2a" stroke-width="2.0"/>
<line x1="3" y1="633" x2="326.1" y2="523.2" stroke="#5f9ea0" stroke-width="2.0"/>
<line x1="620.2" y1="423.4" x2="921" y2="323.2" stroke="#5f9ea0" stroke-width="2.0"/>
<line x1="3" y1="698.6" x2="379.2" y2="571.2" stroke="#dc143c" stroke-width="2.0"/>
<line x1="638.4" y1="483.6" x2="914.5" y2="390.3" stroke="#dc143c" stroke-width="2.0"/>
<line x1="3" y1="728" x2="414.3" y2="590.1" stroke="#7cfc00" stroke-width="2.0"/>
<line x1="642.2" y1="512.7" x2="914.5" y2="421.3" stroke="#7cfc00" stroke-width="2.0"/>
<g fill="#e8609c"><circle cx="14.7" cy="641.3" r="1.6"/><circle cx="28.8" cy="636.5" r="1.6"/><circle cx="43.0" cy="631.7" r="1.6"/><circle cx="57.1" cy="626.9" r="1.6"/><circle cx="71.2" cy="622.1" r="1.6"/><circle cx="85.3" cy="617.3" r="1.6"/><circle cx="99.5" cy="612.5" r="1.6"/><circle cx="113.6" cy="607.7" r="1.6"/><circle cx="127.7" cy="602.9" r="1.6"/><circle cx="141.9" cy="598.1" r="1.6"/><circle cx="156.0" cy="593.3" r="1.6"/><circle cx="170.1" cy="588.5" r="1.6"/><circle cx="184.3" cy="583.7" r="1.6"/><circle cx="198.4" cy="578.9" r="1.6"/><circle cx="212.5" cy="574.1" r="1.6"/><circle cx="226.6" cy="569.3" r="1.6"/><circle cx="240.8" cy="564.5" r="1.6"/><circle cx="254.9" cy="559.7" r="1.6"/><circle cx="269.0" cy="554.9" r="1.6"/><circle cx="283.2" cy="550.1" r="1.6"/><circle cx="297.3" cy="545.3" r="1.6"/><circle cx="311.4" cy="540.5" r="1.6"/><circle cx="325.6" cy="535.7" r="1.6"/><circle cx="339.7" cy="530.9" r="1.6"/><circle cx="353.8" cy="526.1" r="1.6"/><circle cx="367.9" cy="521.3" r="1.6"/><circle cx="382.1" cy="516.5" r="1.6"/><circle cx="396.2" cy="511.7" r="1.6"/><circle cx="410.3" cy="506.9" r="1.6"/><circle cx="424.5" cy="502.1" r="1.6"/><circle cx="438.6" cy="497.3" r="1.6"/><circle cx="452.7" cy="492.5" r="1.6"/><circle cx="466.9" cy="487.7" r="1.6"/><circle cx="481.0" cy="482.9" r="1.6"/><circle cx="495.1" cy="478.1" r="1.6"/><circle cx="509.2" cy="473.3" r="1.6"/><circle cx="523.4" cy="468.5" r="1.6"/><circle cx="537.5" cy="463.7" r="1.6"/><circle cx="551.6" cy="458.9" r="1.6"/><circle cx="565.8" cy="454.1" r="1.6"/><circle cx="579.9" cy="449.3" r="1.6"/><circle cx="594.0" cy="444.5" r="1.6"/><circle cx="608.2" cy="439.7" r="1.6"/><circle cx="622.3" cy="434.9" r="1.6"/><circle cx="636.4" cy="430.1" r="1.6"/><circle cx="650.5" cy="425.3" r="1.6"/><circle cx="664.7" cy="420.5" r="1.6"/><circle cx="678.8" cy="415.7" r="1.6"/><circle cx="692.9" cy="410.9" r="1.6"/><circle cx="707.1" cy="406.1" r="1.6"/><circle cx="721.2" cy="401.3" r="1.6"/><circle cx="735.3" cy="396.5" r="1.6"/><circle cx="749.5" cy="391.7" r="1.6"/><circle cx="763.6" cy="386.9" r="1.6"/><circle cx="777.7" cy="382.1" r="1.6"/><circle cx="791.8" cy="377.3" r="1.6"/><circle cx="806.0" cy="372.5" r="1.6"/><circle cx="820.1" cy="367.7" r="1.6"/><circle cx="834.2" cy="362.9" r="1.6"/><circle cx="848.4" cy="358.1" r="1.6"/><circle cx="862.5" cy="353.3" r="1.6"/><circle cx="876.6" cy="348.5" r="1.6"/><circle cx="890.8" cy="343.7" r="1.6"/><circle cx="904.9" cy="338.9" r="1.6"/><circle cx="919.0" cy="334.1" r="1.6"/></g>
<g fill="#eeb0cc" clip-path="url(#astclip)"><circle cx="14.7" cy="641.3" r="1.6"/><circle cx="28.8" cy="636.5" r="1.6"/><circle cx="43.0" cy="631.7" r="1.6"/><circle cx="57.1" cy="626.9" r="1.6"/><circle cx="71.2" cy="622.1" r="1.6"/><circle cx="85.3" cy="617.3" r="1.6"/><circle cx="99.5" cy="612.5" r="1.6"/><circle cx="113.6" cy="607.7" r="1.6"/><circle cx="127.7" cy="602.9" r="1.6"/><circle cx="141.9" cy="598.1" r="1.6"/><circle cx="156.0" cy="593.3" r="1.6"/><circle cx="170.1" cy="588.5" r="1.6"/><circle cx="184.3" cy="583.7" r="1.6"/><circle cx="198.4" cy="578.9" r="1.6"/><circle cx="212.5" cy="574.1" r="1.6"/><circle cx="226.6" cy="569.3" r="1.6"/><circle cx="240.8" cy="564.5" r="1.6"/><circle cx="254.9" cy="559.7" r="1.6"/><circle cx="269.0" cy="554.9" r="1.6"/><circle cx="283.2" cy="550.1" r="1.6"/><circle cx="297.3" cy="545.3" r="1.6"/><circle cx="311.4" cy="540.5" r="1.6"/><circle cx="325.6" cy="535.7" r="1.6"/><circle cx="339.7" cy="530.9" r="1.6"/><circle cx="353.8" cy="526.1" r="1.6"/><circle cx="367.9" cy="521.3" r="1.6"/><circle cx="382.1" cy="516.5" r="1.6"/><circle cx="396.2" cy="511.7" r="1.6"/><circle cx="410.3" cy="506.9" r="1.6"/><circle cx="424.5" cy="502.1" r="1.6"/><circle cx="438.6" cy="497.3" r="1.6"/><circle cx="452.7" cy="492.5" r="1.6"/><circle cx="466.9" cy="487.7" r="1.6"/><circle cx="481.0" cy="482.9" r="1.6"/><circle cx="495.1" cy="478.1" r="1.6"/><circle cx="509.2" cy="473.3" r="1.6"/><circle cx="523.4" cy="468.5" r="1.6"/><circle cx="537.5" cy="463.7" r="1.6"/><circle cx="551.6" cy="458.9" r="1.6"/><circle cx="565.8" cy="454.1" r="1.6"/><circle cx="579.9" cy="449.3" r="1.6"/><circle cx="594.0" cy="444.5" r="1.6"/><circle cx="608.2" cy="439.7" r="1.6"/><circle cx="622.3" cy="434.9" r="1.6"/><circle cx="636.4" cy="430.1" r="1.6"/><circle cx="650.5" cy="425.3" r="1.6"/><circle cx="664.7" cy="420.5" r="1.6"/><circle cx="678.8" cy="415.7" r="1.6"/><circle cx="692.9" cy="410.9" r="1.6"/><circle cx="707.1" cy="406.1" r="1.6"/><circle cx="721.2" cy="401.3" r="1.6"/><circle cx="735.3" cy="396.5" r="1.6"/><circle cx="749.5" cy="391.7" r="1.6"/><circle cx="763.6" cy="386.9" r="1.6"/><circle cx="777.7" cy="382.1" r="1.6"/><circle cx="791.8" cy="377.3" r="1.6"/><circle cx="806.0" cy="372.5" r="1.6"/><circle cx="820.1" cy="367.7" r="1.6"/><circle cx="834.2" cy="362.9" r="1.6"/><circle cx="848.4" cy="358.1" r="1.6"/><circle cx="862.5" cy="353.3" r="1.6"/><circle cx="876.6" cy="348.5" r="1.6"/><circle cx="890.8" cy="343.7" r="1.6"/><circle cx="904.9" cy="338.9" r="1.6"/><circle cx="919.0" cy="334.1" r="1.6"/></g>
<line x1="303.0" y1="363.5" x2="623.6" y2="563.9" stroke="#ffa500" stroke-width="1" stroke-dasharray="5 5"/>
<line x1="538.5" y1="343.3" x2="388.1" y2="584.1" stroke="#ffa500" stroke-width="1" stroke-dasharray="5 5"/>
<g transform="translate(463.3 463.7) rotate(32.0)"><ellipse rx="190.0" ry="143.0" fill="none" stroke="#ffff00" stroke-width="1.8"/><ellipse rx="190.0" ry="143.0" fill="none" stroke="#ff0000" stroke-width="1.8" stroke-dasharray="2.5 9.5"/></g>
<line x1="488" y1="287.3" x2="483.8" y2="322.8" stroke="#ff0000" stroke-width="2.6"/>
<line x1="448.8" y1="577.1" x2="441.4" y2="630.7" stroke="#0000ff" stroke-width="2.8"/>
<text x="450.5" y="573" font-family="Liberation Serif" font-size="13" fill="#2222ff" font-weight="bold"  xml:space="preserve">S</text>
<circle cx="463.3" cy="463.7" r="4.2" fill="#333" stroke="#888" stroke-width="1.2"/><circle cx="463.3" cy="463.7" r="2.3" fill="#0000e0"/><circle cx="463.3" cy="463.7" r="0.8" fill="#ffa500"/>
<rect x="283.7" y="423.7" width="4" height="5.6" fill="#00e8e8" transform="rotate(-20 285.7 426.5)"/>
<rect x="284.8" y="426.7" width="4" height="5.6" fill="#00e8e8" transform="rotate(-20 286.8 429.5)"/>
<rect x="295.8" y="469.7" width="4" height="5.6" fill="#00e8e8" transform="rotate(-20 297.8 472.5)"/>
<rect x="318.5" y="513.6" width="4" height="5.6" fill="#00e8e8" transform="rotate(-20 320.5 516.4)"/>
<rect x="324.1" y="520.4" width="4" height="5.6" fill="#00e8e8" transform="rotate(-20 326.1 523.2)"/>
<rect x="377.2" y="568.4" width="4" height="5.6" fill="#00e8e8" transform="rotate(-20 379.2 571.2)"/>
<rect x="412.3" y="587.3" width="4" height="5.6" fill="#00e8e8" transform="rotate(-20 414.3 590.1)"/>
<rect x="539.5" y="333.8" width="4" height="5.6" fill="#00e8e8" transform="rotate(-20 541.5 336.6)"/>
<rect x="544.3" y="337.1" width="4" height="5.6" fill="#00e8e8" transform="rotate(-20 546.3 339.9)"/>
<rect x="588.6" y="370.5" width="4" height="5.6" fill="#00e8e8" transform="rotate(-20 590.6 373.3)"/>
<rect x="614.9" y="413.5" width="4" height="5.6" fill="#00e8e8" transform="rotate(-20 616.9 416.3)"/>
<rect x="618.2" y="420.6" width="4" height="5.6" fill="#00e8e8" transform="rotate(-20 620.2 423.4)"/>
<rect x="636.4" y="480.8" width="4" height="5.6" fill="#00e8e8" transform="rotate(-20 638.4 483.6)"/>
<rect x="640.2" y="509.9" width="4" height="5.6" fill="#00e8e8" transform="rotate(-20 642.2 512.7)"/>
<text x="6.2" y="16.9" font-family="Liberation Sans" font-size="13.3" fill="#fff" textLength="84.9" lengthAdjust="spacingAndGlyphs" font-weight="bold"  xml:space="preserve">(107) Camilla</text>
<text x="99.3" y="16.9" font-family="Liberation Sans" font-size="13.3" fill="#fff" textLength="77.4" lengthAdjust="spacingAndGlyphs" font-weight="bold"  xml:space="preserve">2026 Jan 17</text>
<text x="186.1" y="16.9" font-family="Liberation Sans" font-size="13.3" fill="#fff" textLength="94.3" lengthAdjust="spacingAndGlyphs" font-weight="bold"  xml:space="preserve">208.2 ±7.9 km</text>
<text x="6.2" y="33" font-family="Liberation Sans" font-size="13.3" fill="#fff" textLength="70.7" lengthAdjust="spacingAndGlyphs" font-weight="bold"  xml:space="preserve">Geocentric</text>
<text x="85.1" y="33" font-family="Liberation Sans" font-size="13.3" fill="#fff" textLength="9.7" lengthAdjust="spacingAndGlyphs" font-weight="bold"  xml:space="preserve">X</text>
<text x="101.2" y="33" font-family="Liberation Sans" font-size="13.3" fill="#fff" textLength="82.4" lengthAdjust="spacingAndGlyphs" font-weight="bold"  xml:space="preserve">-2541.7 ±1.3</text>
<text x="190.6" y="33" font-family="Liberation Sans" font-size="13.3" fill="#fff" textLength="110.9" lengthAdjust="spacingAndGlyphs" font-weight="bold"  xml:space="preserve">Y 2548.7 ±1.8 km</text>
<text x="14.4" y="72.5" font-family="Liberation Sans" font-size="13.3" fill="#fff" textLength="80" lengthAdjust="spacingAndGlyphs" font-weight="bold"  xml:space="preserve">Star 0.1mas</text>
<text x="458" y="37.1" font-family="Liberation Sans" font-size="24" fill="#fff" font-weight="bold"  xml:space="preserve">N</text>
<text x="10.6" y="478" font-family="Liberation Sans" font-size="24" fill="#fff" font-weight="bold"  xml:space="preserve">E</text>
<rect x="52" y="57" width="1" height="1" fill="#7a5a6a"/>
<text x="673.5" y="206" font-family="Liberation Serif" font-size="12.2" fill="#ececec" textLength="48" lengthAdjust="spacingAndGlyphs"  xml:space="preserve">Sky Plane</text>
<text x="662.5" y="220.5" font-family="Liberation Serif" font-size="11.2" fill="#ececec" textLength="63.5" lengthAdjust="spacingAndGlyphs"  xml:space="preserve">(107) Camilla</text>
<text x="660" y="234.5" font-family="Liberation Serif" font-size="11.2" fill="#ececec" textLength="67.5" lengthAdjust="spacingAndGlyphs"  xml:space="preserve">DAMIT #1813</text>
<text x="288" y="438" font-family="Liberation Sans" font-size="11" fill="#fff"  xml:space="preserve">1</text>
<text x="289.5" y="439.5" font-family="Liberation Sans" font-size="11" fill="#fff"  xml:space="preserve">2</text>
<text x="291" y="438.5" font-family="Liberation Sans" font-size="11" fill="#fff"  xml:space="preserve">3</text>
<text x="300" y="484" font-family="Liberation Sans" font-size="11" fill="#fff"  xml:space="preserve">4</text>
<text x="324" y="529" font-family="Liberation Sans" font-size="11" fill="#fff"  xml:space="preserve">5</text>
<text x="328" y="535.5" font-family="Liberation Sans" font-size="11" fill="#fff"  xml:space="preserve">6</text>
<text x="381.5" y="584" font-family="Liberation Sans" font-size="11" fill="#fff"  xml:space="preserve">7</text>
<text x="416" y="602.5" font-family="Liberation Sans" font-size="11" fill="#fff"  xml:space="preserve">8</text>
<text x="545" y="352" font-family="Liberation Sans" font-size="11" fill="#fff"  xml:space="preserve">1</text>
<text x="548.5" y="353" font-family="Liberation Sans" font-size="11" fill="#fff"  xml:space="preserve">3</text>
<text x="592.5" y="385.5" font-family="Liberation Sans" font-size="11" fill="#fff"  xml:space="preserve">4</text>
<text x="619" y="429" font-family="Liberation Sans" font-size="11" fill="#fff"  xml:space="preserve">5</text>
<text x="622.5" y="437" font-family="Liberation Sans" font-size="11" fill="#fff"  xml:space="preserve">6</text>
<text x="640.5" y="495.5" font-family="Liberation Sans" font-size="11" fill="#fff"  xml:space="preserve">7</text>
<text x="644.5" y="524.5" font-family="Liberation Sans" font-size="11" fill="#fff"  xml:space="preserve">8</text>
<text x="525.5" y="480" font-family="Liberation Sans" font-size="11" fill="#fff"  xml:space="preserve">9</text>
<circle cx="523.8" cy="468.5" r="1.5" fill="#f4d4ec"/>
<rect x="897" y="440" width="17.5" height="70" fill="#000"/>
<path d="M904.5 338.5 H917.6 V589.5 H904.5" fill="none" stroke="#fff" stroke-width="1" stroke-dasharray="4 2"/>
<text transform="translate(901.3 448.3) rotate(90)" textLength="49.8" lengthAdjust="spacingAndGlyphs" font-family="Liberation Serif" font-size="15.5" fill="#fff">100 mas</text>
<circle cx="17.4" cy="881.8" r="5.2" fill="#ff0000"/>
<text x="29.4" y="886.4" font-family="Liberation Serif" font-size="15.3" fill="#fff" textLength="62" lengthAdjust="spacingAndGlyphs"  xml:space="preserve">Disappear</text>
<rect x="10" y="888" width="85" height="15" fill="#000"/>
<circle cx="17.4" cy="895.8" r="5.2" fill="#228b22"/>
<text x="29.4" y="900.5" font-family="Liberation Serif" font-size="15.3" fill="#fff" textLength="58.4" lengthAdjust="spacingAndGlyphs"  xml:space="preserve">Reappear</text>
<rect x="8" y="906" width="170" height="14" fill="#000"/>
<text x="10.2" y="916.3" font-family="Liberation Serif" font-size="10.3" fill="#fff" textLength="73" lengthAdjust="spacingAndGlyphs"  xml:space="preserve">Occult 4.2026.2.13</text>
<text x="113.9" y="916.3" font-family="Liberation Serif" font-size="10.3" fill="#fff" textLength="56.9" lengthAdjust="spacingAndGlyphs"  xml:space="preserve">Phase offset 0°</text>
<path d="M292 895.3 V885.3 H635.9 V895.3 M297.8 875.8 V885.3 M630.7 875.8 V885.3" fill="none" stroke="#fff" stroke-width="1"/>
<path d="M320.2 895.9 V905 H607.8 V895.9" fill="none" stroke="#fff" stroke-width="1" stroke-dasharray="4 2"/>
<text x="465.1" y="883" font-family="Liberation Serif" font-size="11.3" fill="#fff" textLength="132.9" lengthAdjust="spacingAndGlyphs"  xml:space="preserve">(Volume) Mean dia = 232 km</text>
<text x="332.2" y="895.3" font-family="Liberation Serif" font-size="11.3" fill="#fff" textLength="131.5" lengthAdjust="spacingAndGlyphs"  xml:space="preserve">(Surface) Mean dia = 239 km</text>
<text x="447.9" y="918.3" font-family="Liberation Serif" font-size="12.3" fill="#fff" textLength="33.9" lengthAdjust="spacingAndGlyphs" font-style="italic"  xml:space="preserve">200 km</text>
<text x="813.5" y="918.5" font-family="Liberation Serif" font-size="12" fill="#fff" textLength="90" lengthAdjust="spacingAndGlyphs"  xml:space="preserve">Plot width: 642 km</text>
<text x="693.5" y="878.5" font-family="Liberation Sans" font-size="15" fill="#d4d4d4" textLength="144" lengthAdjust="spacingAndGlyphs"  xml:space="preserve">analyst  -  G. Lyzenga</text>

</g>
</svg>
</body></html>
